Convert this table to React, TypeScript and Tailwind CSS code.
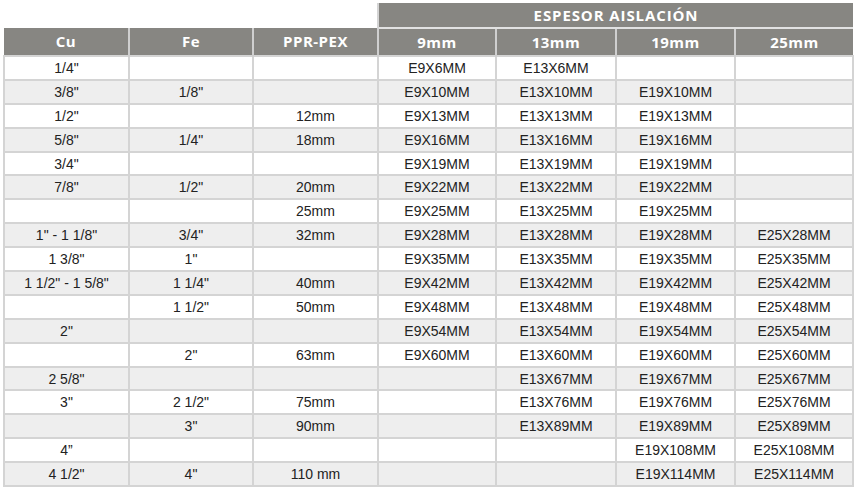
const columns = ["Cu", "Fe", "PPR-PEX", "9mm", "13mm", "19mm", "25mm"];

const rows: string[][] = [
    ['1/4"', "", "", "E9X6MM", "E13X6MM", "", ""],
    ['3/8"', '1/8"', "", "E9X10MM", "E13X10MM", "E19X10MM", ""],
    ['1/2"', "", "12mm", "E9X13MM", "E13X13MM", "E19X13MM", ""],
    ['5/8"', '1/4"', "18mm", "E9X16MM", "E13X16MM", "E19X16MM", ""],
    ['3/4"', "", "", "E9X19MM", "E13X19MM", "E19X19MM", ""],
    ['7/8"', '1/2"', "20mm", "E9X22MM", "E13X22MM", "E19X22MM", ""],
    ["", "", "25mm", "E9X25MM", "E13X25MM", "E19X25MM", ""],
    ['1" - 1 1/8"', '3/4"', "32mm", "E9X28MM", "E13X28MM", "E19X28MM", "E25X28MM"],
    ['1 3/8"', '1"', "", "E9X35MM", "E13X35MM", "E19X35MM", "E25X35MM"],
    ['1 1/2" - 1 5/8"', '1 1/4"', "40mm", "E9X42MM", "E13X42MM", "E19X42MM", "E25X42MM"],
    ["", '1 1/2"', "50mm", "E9X48MM", "E13X48MM", "E19X48MM", "E25X48MM"],
    ['2"', "", "", "E9X54MM", "E13X54MM", "E19X54MM", "E25X54MM"],
    ["", '2"', "63mm", "E9X60MM", "E13X60MM", "E19X60MM", "E25X60MM"],
    ['2 5/8"', "", "", "", "E13X67MM", "E19X67MM", "E25X67MM"],
    ['3"', '2 1/2"', "75mm", "", "E13X76MM", "E19X76MM", "E25X76MM"],
    ["", '3"', "90mm", "", "E13X89MM", "E19X89MM", "E25X89MM"],
    ["4\u201D", "", "", "", "", "E19X108MM", "E25X108MM"],
    ['4 1/2"', '4"', "110 mm", "", "", "E19X114MM", "E25X114MM"],
];

const widths = ["w-[125px]", "w-[124px]", "w-[125px]", "w-[118px]", "w-[120px]", "w-[119px]", "w-[118px]"];

export default function App() {
    return (
        <div className="w-[856px] h-[490px] bg-white pt-[3px] pl-[3px] font-['Liberation_Sans',Arial,sans-serif]">
            <table className="table-fixed border-collapse w-[849px]">
                <colgroup>
                    {widths.map((w, i) => (
                        <col key={i} className={w} />
                    ))}
                </colgroup>
                <thead>
                    <tr className="h-[25px]">
                        <th colSpan={3} className="border-r-2 border-r-[#d4d4d4] bg-white" />
                        <th
                            colSpan={4}
                            className="bg-[#878682] text-white text-[15px] font-bold tracking-[0.9px] font-['Open_Sans',sans-serif] border-b-2 border-b-[#e2e2e2]"
                        >
                            ESPESOR AISLACIÓN
                        </th>
                    </tr>
                    <tr className="h-[28px]">
                        {columns.map((c, i) => (
                            <th
                                key={c}
                                className={
                                    "bg-[#878682] text-white text-[15px] font-bold tracking-[0.5px] font-['Open_Sans',sans-serif] " +
                                    (i < columns.length - 1 ? "border-r-2 border-r-[#cfcfcf]" : "")
                                }
                            >
                                {c}
                            </th>
                        ))}
                    </tr>
                </thead>
                <tbody>
                    {rows.map((row, r) => (
                        <tr
                            key={r}
                            className={"h-[23.9px] " + (r % 2 === 1 ? "bg-[#eeeeee]" : "bg-white")}
                        >
                            {row.map((cell, i) => (
                                <td
                                    key={i}
                                    className="border-2 border-[#d4d4d4] text-center text-[14px] leading-none text-[#222222] p-0"
                                >
                                    {cell}
                                </td>
                            ))}
                        </tr>
                    ))}
                </tbody>
            </table>
        </div>
    );
}
